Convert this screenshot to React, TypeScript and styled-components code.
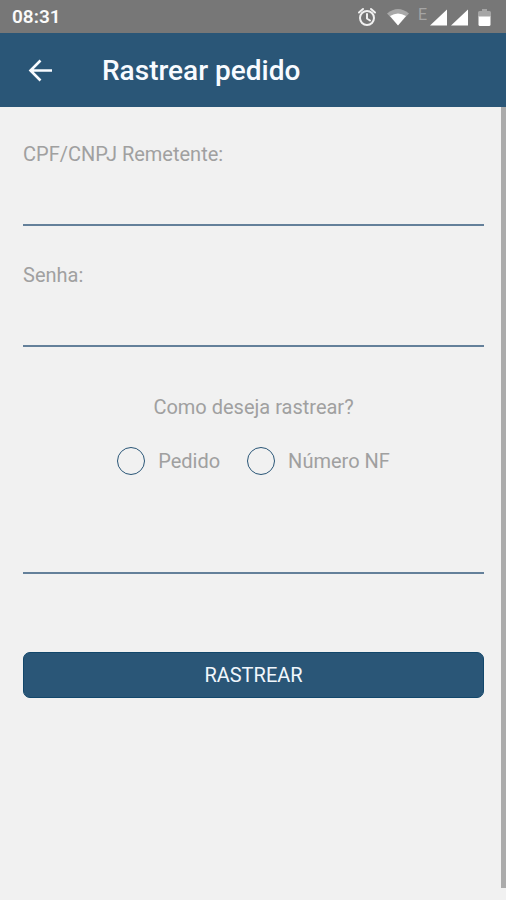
import React, { useState } from "react";
import styled, { createGlobalStyle } from "styled-components";

const color = {
  primary: "#2a5677",
  line: "#64809a",
  status: "#777777",
  page: "#f1f1f1",
  label: "#a0a0a0",
  thumb: "#ababab",
};

const GlobalStyle = createGlobalStyle`
  *, *::before, *::after { box-sizing: border-box; }
  body {
    margin: 0;
    background: ${color.page};
    font-family: Roboto, "Liberation Sans", sans-serif;
  }
`;

const Screen = styled.div`
  display: flex;
  flex-direction: column;
  min-height: 100vh;
  background: ${color.page};
`;

const StatusBar = styled.div`
  display: flex;
  align-items: center;
  justify-content: space-between;
  height: 33px;
  padding: 0 14px 0 12px;
  background: ${color.status};
  color: #fafafa;
`;

const Clock = styled.time`
  font-size: 19px;
  line-height: 24px;
  font-weight: 600;
`;

const StatusIcons = styled.div`
  display: flex;
  align-items: center;
  height: 24px;
`;

const Glyph = styled.svg`
  display: block;
  height: 24px;
`;

const NetworkType = styled.span`
  width: 12px;
  margin-left: 8px;
  padding-bottom: 4px;
  color: #a5a5a5;
  font-size: 16px;
  line-height: 20px;
`;

const AppBar = styled.header`
  display: flex;
  align-items: center;
  gap: 48px;
  height: 74px;
  padding: 2px 26px 0;
  background: ${color.primary};
  color: #f8fbff;
`;

const BackButton = styled.button`
  display: flex;
  padding: 0;
  border: 0;
  background: none;
  color: inherit;
  cursor: pointer;
`;

const Title = styled.h1`
  margin: 0;
  font-size: 28px;
  line-height: 32px;
  font-weight: 500;
`;

const Body = styled.main`
  display: flex;
  flex: 1;
`;

const Form = styled.form`
  display: flex;
  flex: 1;
  flex-direction: column;
  min-width: 0;
  padding: 35px 17px 24px 23px;
`;

const ScrollThumb = styled.div`
  width: 5px;
  margin-bottom: 12px;
  background: ${color.thumb};
`;

const Field = styled.div`
  display: flex;
  flex-direction: column;
  margin-bottom: 37px;
`;

const Label = styled.label`
  color: ${color.label};
  font-size: 20px;
  line-height: 24px;
`;

const TextInput = styled.input`
  width: 100%;
  height: 60px;
  padding: 20px 0 0;
  border: 0;
  border-bottom: 2px solid ${color.line};
  border-radius: 0;
  outline: 0;
  background: transparent;
  color: #555555;
  font: inherit;
  font-size: 20px;
`;

const Choices = styled.fieldset`
  display: flex;
  flex-direction: column;
  margin: 11px 0 39px;
  padding: 0;
  border: 0;
`;

const Question = styled.legend`
  width: 100%;
  margin-bottom: 28px;
  padding: 0;
  color: ${color.label};
  font-size: 20px;
  line-height: 24px;
  text-align: center;
`;

const Options = styled.div`
  display: flex;
  justify-content: center;
  gap: 27px;
`;

const Option = styled(Label)`
  display: flex;
  align-items: center;
  gap: 13px;
  cursor: pointer;
`;

const Radio = styled.input`
  appearance: none;
  width: 28px;
  height: 28px;
  margin: 0;
  border: 1px solid ${color.primary};
  border-radius: 50%;

  &:checked {
    background: radial-gradient(circle, ${color.primary} 8px, transparent 9px);
  }
`;

const Submit = styled.button`
  height: 46px;
  margin-top: 78px;
  border: 1px solid #12476b;
  border-radius: 7px;
  background: ${color.primary};
  color: #f0f6fc;
  font: inherit;
  font-size: 20px;
  cursor: pointer;
`;

const methods = [
  { value: "pedido", label: "Pedido" },
  { value: "nf", label: "Número NF" },
];

export default function App() {
  const [method, setMethod] = useState("");

  return (
    <Screen>
      <GlobalStyle />
      <StatusBar>
        <Clock>08:31</Clock>
        <StatusIcons>
          <Glyph width="54" viewBox="0 0 54 24" aria-hidden="true">
            <g fill="none" stroke="#f0f0f0" strokeWidth="2" strokeLinecap="round">
              <circle cx="11" cy="13" r="7" />
              <path d="M11 9v4.500l3 2M3 7.500l4-3.500M19 7.500l-4-3.500" />
            </g>
            <path d="M31 8.500q11-9 22 0L42 20z" fill="#a8a8a8" />
            <path d="M34 11q8-5 16 0l-8 9.500z" fill="#fff" />
          </Glyph>
          <NetworkType>E</NetworkType>
          <Glyph width="62" viewBox="0 0 62 24" aria-hidden="true">
            <path d="M17 4.500V20.500H0zM38 4.500V20.500H21z" fill="#fff" />
            <path d="M52 4h5v2h2.500q1.500 0 1.500 1.500V12H48V7.500Q48 6 49.500 6H52z" fill="#a5a5a5" />
            <path d="M48.500 11.500h12v8q0 1.500-1.500 1.500h-9q-1.500 0-1.500-1.500z" fill="#fff" />
          </Glyph>
        </StatusIcons>
      </StatusBar>
      <AppBar>
        <BackButton type="button" aria-label="Voltar">
          <svg width="28" height="28" viewBox="0 0 28 28" fill="none" stroke="currentColor" strokeWidth="2.600">
            <path d="M26 13.500H4.500M14.500 3.500L4.500 13.500l10 10" />
          </svg>
        </BackButton>
        <Title>Rastrear pedido</Title>
      </AppBar>
      <Body>
        <Form onSubmit={(event) => event.preventDefault()}>
          <Field>
            <Label htmlFor="document">CPF/CNPJ Remetente:</Label>
            <TextInput id="document" type="text" />
          </Field>
          <Field>
            <Label htmlFor="password">Senha:</Label>
            <TextInput id="password" type="password" />
          </Field>
          <Choices>
            <Question>Como deseja rastrear?</Question>
            <Options>
              {methods.map(({ value, label }) => (
                <Option key={value}>
                  <Radio
                    type="radio"
                    name="method"
                    value={value}
                    checked={method === value}
                    onChange={() => setMethod(value)}
                  />
                  {label}
                </Option>
              ))}
            </Options>
          </Choices>
          <TextInput type="text" aria-label="Número para rastreio" />
          <Submit type="submit">RASTREAR</Submit>
        </Form>
        <ScrollThumb />
      </Body>
    </Screen>
  );
}
